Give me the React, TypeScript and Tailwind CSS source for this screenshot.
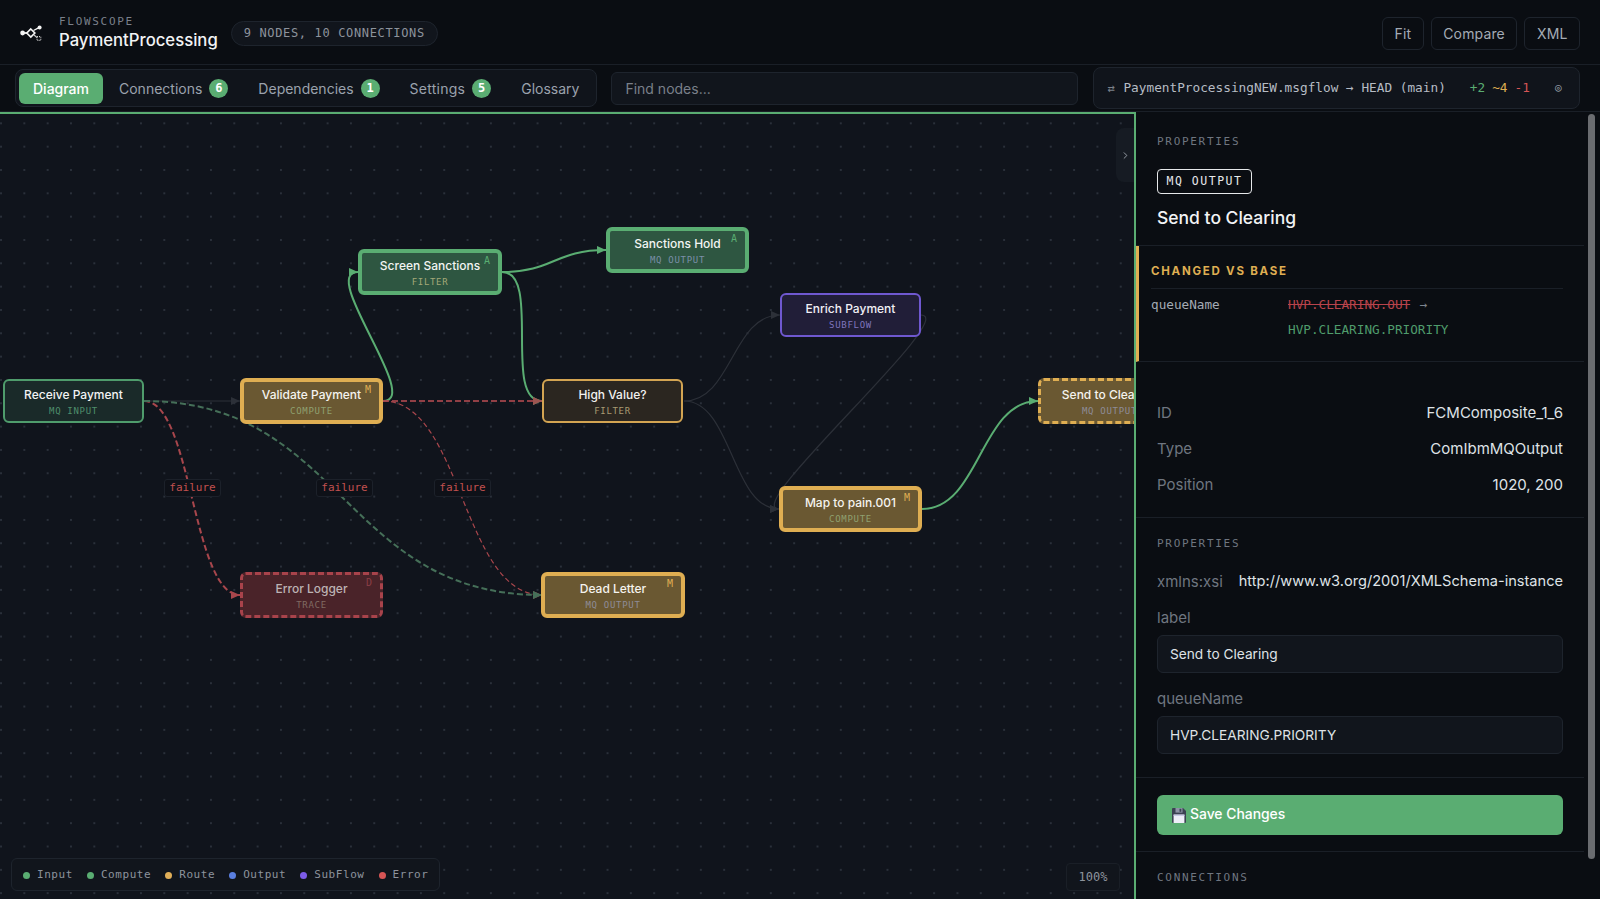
import { ChevronRight } from 'lucide-react';

const MONO = "font-['DejaVu_Sans_Mono',monospace]";

const nodes = [
  { id: 'receive', x: 3, y: 379, w: 141, h: 44, title: 'Receive Payment', sub: 'MQ INPUT', box: 'border-2 border-[#4f9c6c] bg-[#1a2a29]', titleCls: 'text-[#f2f3f3]', subCls: 'text-[#4f8f6c]' },
  { id: 'validate', x: 240, y: 378, w: 143, h: 46, title: 'Validate Payment', sub: 'COMPUTE', badge: 'M', box: 'border-4 border-[#dfae52] bg-[#6a5832]', titleCls: 'text-[#f5f3ee]', subCls: 'text-[#8fa070]', badgeCls: 'text-[#dfae52]' },
  { id: 'screen', x: 358, y: 249, w: 144, h: 46, title: 'Screen Sanctions', sub: 'FILTER', badge: 'A', box: 'border-4 border-[#5aad72] bg-[#2e5641]', titleCls: 'text-[#f2f4f2]', subCls: 'text-[#a3a878]', badgeCls: 'text-[#5aad72]' },
  { id: 'hold', x: 606, y: 227, w: 143, h: 46, title: 'Sanctions Hold', sub: 'MQ OUTPUT', badge: 'A', box: 'border-4 border-[#5aad72] bg-[#2e5641]', titleCls: 'text-[#f2f4f2]', subCls: 'text-[#7b8fa8]', badgeCls: 'text-[#5aad72]' },
  { id: 'high', x: 542, y: 379, w: 141, h: 44, title: 'High Value?', sub: 'FILTER', box: 'border-2 border-[#d3a452] bg-[#2b2620]', titleCls: 'text-[#f2f1ef]', subCls: 'text-[#a89a72]' },
  { id: 'enrich', x: 780, y: 293, w: 141, h: 44, title: 'Enrich Payment', sub: 'SUBFLOW', box: 'border-2 border-[#6f58d0] bg-[#211e38]', titleCls: 'text-[#f1f0f5]', subCls: 'text-[#7f75bd]' },
  { id: 'map', x: 779, y: 486, w: 143, h: 46, title: 'Map to pain.001', sub: 'COMPUTE', badge: 'M', box: 'border-4 border-[#dfae52] bg-[#6a5832]', titleCls: 'text-[#f5f3ee]', subCls: 'text-[#8fa070]', badgeCls: 'text-[#dfae52]' },
  { id: 'send', x: 1038, y: 378, w: 143, h: 46, title: 'Send to Clearing', sub: 'MQ OUTPUT', box: 'border-[3px] border-dashed border-[#dfae52] bg-[#6a5832]', titleCls: 'text-[#f5f3ee]', subCls: 'text-[#8e8c98]' },
  { id: 'dead', x: 541, y: 572, w: 144, h: 46, title: 'Dead Letter', sub: 'MQ OUTPUT', badge: 'M', box: 'border-4 border-[#dfae52] bg-[#6a5832]', titleCls: 'text-[#f5f3ee]', subCls: 'text-[#8e8c98]', badgeCls: 'text-[#dfae52]' },
  { id: 'error', x: 240, y: 572, w: 143, h: 46, title: 'Error Logger', sub: 'TRACE', badge: 'D', box: 'border-[3px] border-dashed border-[#a8434b] bg-[#4a2329]', titleCls: 'text-[#bdb3b4]', subCls: 'text-[#806a62]', badgeCls: 'text-[#8c3e46]' },
];

const GRAY = '#2c3038';
const GREEN = '#5aad72';
const DIM_GREEN = '#456f58';
const RED = '#a8464c';

// later entries paint over earlier ones, the arrow tips that overlap depend on this
const edges = [
  { d: 'M144 401 L240 401', color: GRAY, width: 1.2, tip: [240, 401] },
  { d: 'M144 401 C192 401 192 595 240 595', color: RED, width: 2, dash: '6 3', tip: [240, 595] },
  { d: 'M383 401 C423 401 318 272 358 272', color: GREEN, width: 2, tip: [358, 272] },
  { d: 'M502 272 C542 272 502 401 542 401', color: GREEN, width: 2, tip: [542, 401] },
  { d: 'M383 401 L542 401', color: RED, width: 2, dash: '6 3', tip: [542, 401], opacity: 0.85 },
  { d: 'M383 401 C462 401 462 595 542 595', color: RED, width: 1.2, dash: '5 3', tip: [542, 595] },
  { d: 'M144 401 C343 401 343 595 542 595', color: DIM_GREEN, width: 2, dash: '6 3', tip: [542, 595] },
  { d: 'M502 272 C554 272 554 250 606 250', color: GREEN, width: 2, tip: [606, 250] },
  { d: 'M684 401 C732 401 732 315 780 315', color: GRAY, width: 1.2, tip: [780, 315] },
  { d: 'M684 401 C732 401 732 509 779 509', color: GRAY, width: 1.2, tip: [779, 509] },
  { d: 'M921 315 C961 315 739 509 779 509', color: GRAY, width: 1.2, tip: [779, 509] },
  { d: 'M922 509 C980 509 980 401 1038 401', color: GREEN, width: 2, tip: [1038, 401] },
];

const failureLabels = [192, 344, 462];

const legend = [
  { name: 'Input', dot: 'bg-[#5aad72]' },
  { name: 'Compute', dot: 'bg-[#5aad72]' },
  { name: 'Route', dot: 'bg-[#e0ae58]' },
  { name: 'Output', dot: 'bg-[#5a7fe0]' },
  { name: 'SubFlow', dot: 'bg-[#7c5ce8]' },
  { name: 'Error', dot: 'bg-[#d65555]' },
];

function Logo() {
  return (
    <svg width="22" height="18" viewBox="0 0 22 18" fill="none" className="shrink-0">
      <circle cx="2.6" cy="9" r="2.4" fill="#f4f4f4" />
      <path d="M4 9h3" stroke="#f4f4f4" strokeWidth="1.8" />
      <path d="M10.8 5 14.8 9 10.8 13 6.8 9Z" stroke="#f4f4f4" strokeWidth="1.7" />
      <path d="M13.5 6.5 19 3.6" stroke="#f4f4f4" strokeWidth="1.4" />
      <circle cx="19.6" cy="3.4" r="2" fill="#f4f4f4" />
      <path d="M14 11l3 2.5" stroke="#c8c8c8" strokeWidth="1.1" />
      <rect x="17" y="12.6" width="3.8" height="3.8" stroke="#c8c8c8" strokeWidth="1.1" strokeDasharray="1 1" />
    </svg>
  );
}

function Tab({ label, count, active, wide }: { label: string; count?: number; active?: boolean; wide?: boolean }) {
  return (
    <div className={`h-[31px] flex items-center gap-[7px] px-3.5 rounded-md text-[14px] ${active ? 'bg-[#5aad72] text-white font-medium' : 'text-[#9ba2ad]'}`}>
      <span className={wide ? 'tracking-[0.25px]' : ''}>{label}</span>
      {count !== undefined && (
        <span className={`${MONO} w-[19px] h-[19px] rounded-full bg-[#5aad72] text-white text-[12px] font-bold flex items-center justify-center`}>{count}</span>
      )}
    </div>
  );
}

function HeaderButton({ label }: { label: string }) {
  return (
    <div className="h-[33px] px-[11.5px] flex items-center rounded-md border border-[#1e242d] text-[14px] tracking-[0.15px] text-[#a4abb5]">{label}</div>
  );
}

function Canvas() {
  return (
    <div className="relative w-[1136px] shrink-0 overflow-hidden border-t-2 border-r-2 border-[#5aad72] bg-[#10141c] bg-[radial-gradient(circle,#2a303a_1px,transparent_1.2px)] bg-[size:23.33px_23.33px] bg-[position:-10.67px_-2.33px]">
      <svg width="1134" height="785" viewBox="0 114 1134 785" fill="none" className="absolute left-0 top-0">
        {edges.map((e) => (
          <g key={e.d} opacity={e.opacity}>
            <path d={e.d} stroke={e.color} strokeWidth={e.width} strokeDasharray={e.dash} />
            <polygon points={`${e.tip[0]},${e.tip[1]} ${e.tip[0] - 9},${e.tip[1] - 4} ${e.tip[0] - 9},${e.tip[1] + 4}`} fill={e.color} />
          </g>
        ))}
      </svg>

      {failureLabels.map((x) => (
        <div
          key={x}
          style={{ left: x - 28, top: 479 - 114 }}
          className={`${MONO} absolute w-[57px] h-[18px] flex items-center justify-center rounded-[3px] border border-[#1c212a] bg-[#0e1118] text-[11px] text-[#c2504f]`}
        >
          failure
        </div>
      ))}

      {nodes.map((n) => (
        <div
          key={n.id}
          style={{ left: n.x, top: n.y - 114, width: n.w, height: n.h }}
          className={`absolute rounded-md flex flex-col items-center justify-center pt-[2px] ${n.box}`}
        >
          <div className={`text-[12px] leading-[17px] font-medium whitespace-nowrap ${n.titleCls}`}>{n.title}</div>
          <div className={`${MONO} mt-[2px] text-[9px] leading-[13px] tracking-[0.7px] whitespace-nowrap ${n.subCls}`}>{n.sub}</div>
          {n.badge && (
            <span className={`${MONO} absolute right-[8px] top-[1px] text-[10px] leading-[13px] ${n.badgeCls}`}>{n.badge}</span>
          )}
        </div>
      ))}

      <div className="absolute right-0 top-[14px] w-[18px] h-[54px] rounded-l-lg bg-[#161b23] flex items-center justify-center text-[#a0a6ae]">
        <ChevronRight size={11} strokeWidth={2} />
      </div>

      <div className={`${MONO} absolute left-[11px] bottom-[8px] h-[33px] flex items-center gap-[14px] px-[11px] pt-[1px] rounded-md border border-[#1e242d] bg-[#11151c] text-[11px] tracking-[0.56px] text-[#8d939c]`}>
        {legend.map((l) => (
          <div key={l.name} className="flex items-center gap-[7px]">
            <span className={`w-[7px] h-[7px] rounded-full ${l.dot}`} />
            {l.name}
          </div>
        ))}
      </div>

      <div className={`${MONO} absolute right-[14px] bottom-[8px] w-[54px] h-[28px] flex items-center justify-center rounded border border-[#1a1f27] bg-[#11151c] text-[12px] text-[#8d939c]`}>
        100%
      </div>
    </div>
  );
}

function SectionLabel({ children }: { children: string }) {
  return <div className={`${MONO} text-[11px] leading-[14px] tracking-[1.7px] text-[#6f7680]`}>{children}</div>;
}

function InfoRow({ label, value }: { label: string; value: string }) {
  return (
    <div className="h-[36px] flex items-center justify-between text-[15px]">
      <span className="text-[#6f7680]">{label}</span>
      <span className="text-[#dfe2e6]">{value}</span>
    </div>
  );
}

function Field({ label, value }: { label: string; value: string }) {
  return (
    <div>
      <div className="h-[35px] flex items-center pt-[2px] text-[15px] text-[#6f7680]">{label}</div>
      <div className="h-[38px] flex items-center px-3 rounded-md border border-[#1e242d] bg-[#11151c] text-[13.7px] text-[#dfe2e6]">{value}</div>
    </div>
  );
}

function Panel() {
  return (
    <div className="relative flex-1 overflow-hidden">
      <div className="w-[448px]">
        <div className="h-[134px] border-b border-[#1a1f27] px-[21px] pt-[23px]">
          <SectionLabel>PROPERTIES</SectionLabel>
          <div className={`${MONO} mt-[20px] w-[95px] h-[25px] flex items-center justify-center rounded border border-[#e6e8ea] text-[11.5px] tracking-[1.5px] text-[#e6e8ea]`}>MQ OUTPUT</div>
          <div className="mt-[11px] text-[17.5px] leading-[26px] font-medium text-[#f2f3f5]">Send to Clearing</div>
        </div>

        <div className="h-[116px] border-b border-[#1a1f27] border-l-[3px] border-l-[#dfae52] pl-[12px] pr-[21px] pt-[17px]">
          <div className="h-[17px] text-[11.5px] leading-[17px] font-bold tracking-[1.75px] text-[#dfae52]">CHANGED VS BASE</div>
          <div className="mt-[8px] border-t border-[#1a1f27] pt-[6px] flex">
            <div className={`${MONO} w-[137px] text-[12.7px] leading-[20px] text-[#a4abb5]`}>queueName</div>
            <div className={`${MONO} -mt-[3px] text-[12.7px] leading-[25px]`}>
              <div>
                <span className="text-[#b8434b] line-through">HVP.CLEARING.OUT</span>
                <span className="ml-[2px] text-[#7d848e]"> →</span>
              </div>
              <div className="text-[#4f9c6c]">HVP.CLEARING.PRIORITY</div>
            </div>
          </div>
        </div>

        <div className="h-[156px] border-b border-[#1a1f27] px-[21px] pt-[33px]">
          <InfoRow label="ID" value="FCMComposite_1_6" />
          <InfoRow label="Type" value="ComIbmMQOutput" />
          <InfoRow label="Position" value="1020, 200" />
        </div>

        <div className="h-[260px] border-b border-[#1a1f27] px-[21px] pt-[19px]">
          <SectionLabel>PROPERTIES</SectionLabel>
          <div className="mt-[20px] h-[22px] flex items-center justify-between text-[15px]">
            <span className="text-[#6f7680]">xmlns:xsi</span>
            <span className="text-[14.6px] text-[#dfe2e6]">http://www.w3.org/2001/XMLSchema-instance</span>
          </div>
          <div className="mt-[7px]">
            <Field label="label" value="Send to Clearing" />
            <div className="mt-[8px]">
              <Field label="queueName" value="HVP.CLEARING.PRIORITY" />
            </div>
          </div>
        </div>

        <div className="h-[74px] border-b border-[#1a1f27] px-[21px] pt-[17px]">
          <div className="h-[40px] rounded-md bg-[#5aad72] flex items-center gap-[4px] pl-[15px] text-[13.9px] font-medium text-white">
            <svg width="14" height="15" viewBox="0 0 14 15" className="shrink-0">
              <path d="M0 1a1 1 0 0 1 1-1h10l3 3v11a1 1 0 0 1-1 1H1a1 1 0 0 1-1-1Z" fill="#3b4152" />
              <rect x="3.5" y="0" width="7" height="4.6" fill="#8d93a5" />
              <rect x="7.5" y="0.8" width="1.8" height="3" fill="#3b4152" />
              <rect x="1.6" y="6.6" width="10.8" height="8.4" fill="#eeeef8" />
              <rect x="1.6" y="6.6" width="10.8" height="1.4" fill="#c7c9e4" />
            </svg>
            <span className="-mt-[2px]">Save Changes</span>
          </div>
        </div>

        <div className="px-[21px] pt-[19px]">
          <SectionLabel>CONNECTIONS</SectionLabel>
        </div>
      </div>

      <div className="absolute right-[5px] top-[2px] w-[7px] h-[745px] rounded-full bg-[#6a6c70]" />
    </div>
  );
}

export default function App() {
  return (
    <div className="h-screen w-full overflow-hidden flex flex-col bg-[#0a0d12] font-['Inter',sans-serif]">
      <div className="h-[65px] shrink-0 border-b border-[#1a1f27] flex items-center pt-[2px] px-[20px]">
        <Logo />
        <div className="ml-[17px]">
          <div className={`${MONO} text-[11px] leading-[14px] tracking-[1.7px] text-[#7a808a]`}>FLOWSCOPE</div>
          <div className="text-[16.7px] leading-[23px] font-medium text-[#f2f3f5]">PaymentProcessing</div>
        </div>
        <div className={`${MONO} ml-[13px] h-[25px] px-[12px] flex items-center rounded-full border border-[#1e242d] bg-[#11151c] text-[12px] tracking-[0.65px] text-[#8d939c]`}>
          9 NODES, 10 CONNECTIONS
        </div>
        <div className="ml-auto flex gap-[7px]">
          <HeaderButton label="Fit" />
          <HeaderButton label="Compare" />
          <HeaderButton label="XML" />
        </div>
      </div>

      <div className="h-[47px] shrink-0 border-b border-[#1a1f27] flex items-center pl-[15px] pr-[20px]">
        <div className="h-[38px] flex items-center gap-[2px] px-[3px] rounded-lg border border-[#1e242d] bg-[#10141b]">
          <Tab label="Diagram" active />
          <Tab label="Connections" count={6} />
          <Tab label="Dependencies" count={1} />
          <Tab label="Settings" count={5} wide />
          <Tab label="Glossary" />
        </div>
        <div className="ml-[14px] w-[467px] h-[33px] flex items-center px-[13px] rounded-md border border-[#1e242d] bg-[#11151c] text-[14px] text-[#7a808a]">
          Find nodes...
        </div>
        <div className={`${MONO} ml-[15px] flex-1 h-[42px] flex items-center pl-[13px] rounded-lg border border-[#1e242d] bg-[#10141b] text-[12.75px] whitespace-nowrap`}>
          <span className="text-[#7a808a] text-[12px] w-[16px]">⇄</span>
          <span className="text-[#b6bcc4]">PaymentProcessingNEW.msgflow → HEAD (main)</span>
          <span className="ml-[24px] text-[#5aad72]">+2</span>
          <span className="ml-[7px] text-[#dfae52]">~4</span>
          <span className="ml-[7px] text-[#d65555]">-1</span>
          <span className="ml-[25px] text-[#9ba2ad] text-[11px]">◎</span>
        </div>
      </div>

      <div className="flex-1 flex min-h-0">
        <Canvas />
        <Panel />
      </div>
    </div>
  );
}
